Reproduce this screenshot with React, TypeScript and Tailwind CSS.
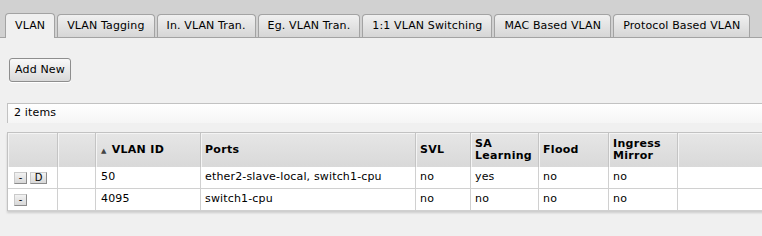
import React from "react";

const tabs = [
  "VLAN",
  "VLAN Tagging",
  "In. VLAN Tran.",
  "Eg. VLAN Tran.",
  "1:1 VLAN Switching",
  "MAC Based VLAN",
  "Protocol Based VLAN",
];

const rows = [
  { d: true, id: "50", ports: "ether2-slave-local, switch1-cpu", svl: "no", sa: "yes", flood: "no", mirror: "no" },
  { d: false, id: "4095", ports: "switch1-cpu", svl: "no", sa: "no", flood: "no", mirror: "no" },
];

const gridCols = "grid grid-cols-[50px_38px_105px_215px_55px_68px_70px_69px_1fr]";

function HeadCell({ children }: { children?: React.ReactNode }) {
  return (
    <div className="h-[34px] flex items-center pl-[4px] border-r border-[#c4c4c4] bg-gradient-to-b from-[#e6e6e6] to-[#d9d9d9] shadow-[inset_1px_1px_0_#f4f4f4] font-bold leading-[12px] tracking-[0.3px]">
      {children}
    </div>
  );
}

function Cell({ children }: { children?: React.ReactNode }) {
  return (
    <div className="h-[22px] flex items-center pl-[4px] border-r border-b border-[#d0d0d0] bg-white whitespace-nowrap">
      {children}
    </div>
  );
}

function SmallBtn({ label, w }: { label: string; w: string }) {
  return (
    <div
      className={`${w} h-[12px] mt-[1px] flex items-center justify-center border border-t-[#cacaca] border-l-[#cacaca] border-r-[#8c8c8c] border-b-[#8c8c8c] bg-gradient-to-b from-[#f2f2f2] to-[#d8d8d8] text-[10px] leading-none tracking-normal`}
    >
      {label}
    </div>
  );
}

export default function App() {
  return (
    <div className="w-[762px] h-[236px] overflow-hidden bg-[#f0f0f0] text-[11px] tracking-[0.16px] text-black font-['DejaVu_Sans',Verdana,sans-serif]">
      <div className="h-[38px] bg-[#d1d1d1] border-b border-[#a3a3a3] flex items-end pl-[5px] gap-[2px]">
        {tabs.map((t, i) =>
          i === 0 ? (
            <div
              key={t}
              className="shrink-0 whitespace-nowrap h-[25px] mb-[-1px] px-[9px] flex items-center bg-[#f0f0f0] border border-b-0 border-[#a3a3a3] rounded-t-[4px] pt-[1px] tracking-[0.13px]"
            >
              {t}
            </div>
          ) : (
            <div
              key={t}
              className="shrink-0 whitespace-nowrap h-[23px] px-[9px] flex items-center bg-gradient-to-b from-[#f0f0f0] to-[#d6d6d6] border border-b-0 border-[#a3a3a3] rounded-t-[4px] pt-[1px] tracking-[0.13px]"
            >
              {t}
            </div>
          )
        )}
      </div>

      <div className="pl-[9px] pt-[20px]">
        <div className="w-[62px] h-[24px] flex items-center justify-center border border-[#8e8e8e] rounded-[3px] bg-gradient-to-b from-[#f9f9f9] to-[#d9d9d9] shadow-[0_1px_0_#ffffff]">
          Add New
        </div>
      </div>

      <div className="ml-[7px] mr-[-10px] mt-[21px] h-[20px] flex items-center pl-[6px] border-t border-l border-[#c2c2c2] bg-gradient-to-b from-[#ffffff] to-[#f5f5f5]">
        2 items
      </div>

      <div className="ml-[7px] mr-[-10px] mt-[9px] border-t border-l border-[#c2c2c2] shadow-[0_2px_2px_rgba(0,0,0,0.15)]">
        <div className={gridCols}>
          <HeadCell />
          <HeadCell />
          <HeadCell>
            <span className="text-[7px] text-[#444] mr-[5px] mt-[1px] ml-[1px]">▲</span>VLAN ID
          </HeadCell>
          <HeadCell>Ports</HeadCell>
          <HeadCell>SVL</HeadCell>
          <HeadCell>
            <span>
              SA
              <br />
              Learning
            </span>
          </HeadCell>
          <HeadCell>Flood</HeadCell>
          <HeadCell>
            <span>
              Ingress
              <br />
              Mirror
            </span>
          </HeadCell>
          <HeadCell />
        </div>
        {rows.map((r) => (
          <div key={r.id} className={gridCols}>
            <div className="h-[22px] flex items-center pl-[6px] gap-[3px] border-r border-b border-[#d0d0d0] bg-white">
              <SmallBtn label="-" w="w-[13px]" />
              {r.d && <SmallBtn label="D" w="w-[17px]" />}
            </div>
            <Cell />
            <Cell>
              <span className="pl-[1px]">{r.id}</span>
            </Cell>
            <Cell>{r.ports}</Cell>
            <Cell>{r.svl}</Cell>
            <Cell>{r.sa}</Cell>
            <Cell>{r.flood}</Cell>
            <Cell>{r.mirror}</Cell>
            <Cell />
          </div>
        ))}
      </div>
    </div>
  );
}
